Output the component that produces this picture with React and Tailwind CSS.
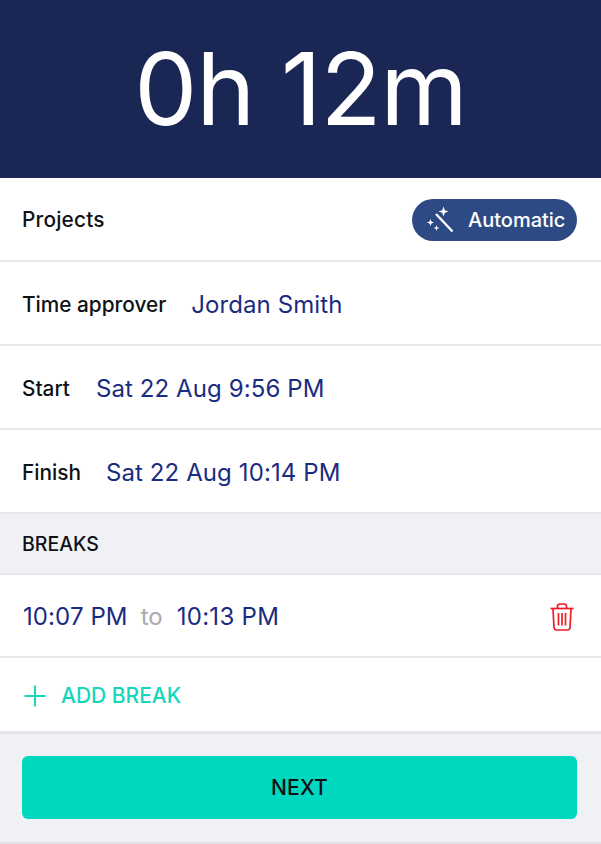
import React from 'react';

const Wand = () => (
  <svg width="28" height="28" viewBox="0 0 28 28" fill="none" className="text-white">
    {/* wand */}
    <path d="M10 8 L26.5 25.5" stroke="currentColor" strokeWidth="2.4" />
    {/* sparkles */}
    <path d="M17.5 0.5 L18.8 4.2 L22.5 5.5 L18.8 6.8 L17.5 10.5 L16.2 6.8 L12.5 5.5 L16.2 4.2 Z" fill="currentColor" />
    <path d="M4.5 13 L5.4 15.6 L8 16.5 L5.4 17.4 L4.5 20 L3.6 17.4 L1 16.5 L3.6 15.6 Z" fill="currentColor" />
    <path d="M10.5 19 L11.2 21.3 L13.5 22 L11.2 22.7 L10.5 25 L9.8 22.7 L7.5 22 L9.8 21.3 Z" fill="currentColor" />
  </svg>
);

const Trash = () => (
  <svg width="24" height="28" viewBox="0 0 24 28" fill="none" stroke="#ee1c25" strokeWidth="1.7">
    <path d="M0.5 5.5 H23.5" />
    <path d="M7.5 5 V3.5 Q7.5 1 10 1 H14 Q16.5 1 16.5 3.5 V5" />
    <path d="M3 6 L4 24.5 Q4.2 27 6.5 27 H17.5 Q19.8 27 20 24.5 L21 6" />
    <path d="M8.5 10 V22.5 M12 10 V22.5 M15.5 10 V22.5" />
  </svg>
);

const AddIcon = () => (
  <svg width="24" height="24" viewBox="0 0 24 24" fill="none" stroke="#14d6bb" strokeWidth="2">
    <path d="M12 1.5 V22.5 M1.5 12 H22.5" />
  </svg>
);

const Row = ({ label, value, gap }) => (
  <div className="h-[84px] flex items-center pl-[22px] pr-[23px] pt-[3px] bg-white border-b-2 border-[#e6e7ea]">
    <span className="text-[20.8px] font-[550] text-[#0f1115]">{label}</span>
    <span className={`text-[24px] text-[#1a2c80] tracking-[0.1px] ${gap}`}>{value}</span>
  </div>
);

export default function App() {
  return (
    <div className="w-[601px] h-[844px] overflow-hidden bg-[#f0f1f5] font-['Inter',sans-serif]">
      <div className="h-[178px] bg-[#1a2754] flex items-center justify-center">
        <span className="text-[100px] leading-none text-white -tracking-[1.2px]">0h 12m</span>
      </div>
      <div className="h-[84px] flex items-center justify-between pl-[22px] pr-[24px] bg-white border-b-2 border-[#e6e7ea]">
        <span className="text-[20.8px] font-[550] text-[#0f1115] tracking-[0.2px] pt-[2px]">Projects</span>
        <div className="w-[165px] h-[42px] rounded-full bg-[#2d4a85] flex items-center pl-[14px] gap-[14px] mt-[1px]">
          <Wand />
          <span className="text-[20px] font-medium text-white pt-[1px]">Automatic</span>
        </div>
      </div>
      <Row label="Time approver" value="Jordan Smith" gap="ml-[25px]" />
      <Row label="Start" value="Sat 22 Aug 9:56 PM" gap="ml-[26px]" />
      <Row label="Finish" value="Sat 22 Aug 10:14 PM" gap="ml-[25px]" />
      <div className="h-[61px] flex items-center px-[22px] pt-[2px] bg-[#f0f1f5] border-b-2 border-[#e6e7ea]">
        <span className="text-[19.5px] font-medium text-[#0f1115]">BREAKS</span>
      </div>
      <div className="h-[83px] flex items-center pl-[23px] pr-[27px] pt-[2px] bg-white border-b-2 border-[#e6e7ea]">
        <span className="text-[24px] text-[#1a2c80] tracking-[0.1px]">10:07 PM</span>
        <span className="text-[24px] text-[#a9abb2] ml-[13px]">to</span>
        <span className="text-[24px] text-[#1a2c80] ml-[14px] tracking-[0.3px]">10:13 PM</span>
        <div className="ml-auto flex">
          <Trash />
        </div>
      </div>
      <div className="h-[76px] flex items-center pl-[23px] pt-[2px] bg-white border-b-[3px] border-[#e4e5e8]">
        <AddIcon />
        <span className="text-[21px] font-medium text-[#14d6bb] ml-[14px]">ADD BREAK</span>
      </div>
      <div className="pt-[22px] pl-[22px] pr-[24px] pb-[23px] border-b-2 border-[#e2e3e7]">
        <div className="h-[63px] pt-[1px] rounded-[6px] bg-[#00d7bf] flex items-center justify-center">
          <span className="text-[21px] font-medium text-[#0f1115] tracking-[0.2px]">NEXT</span>
        </div>
      </div>
    </div>
  );
}
